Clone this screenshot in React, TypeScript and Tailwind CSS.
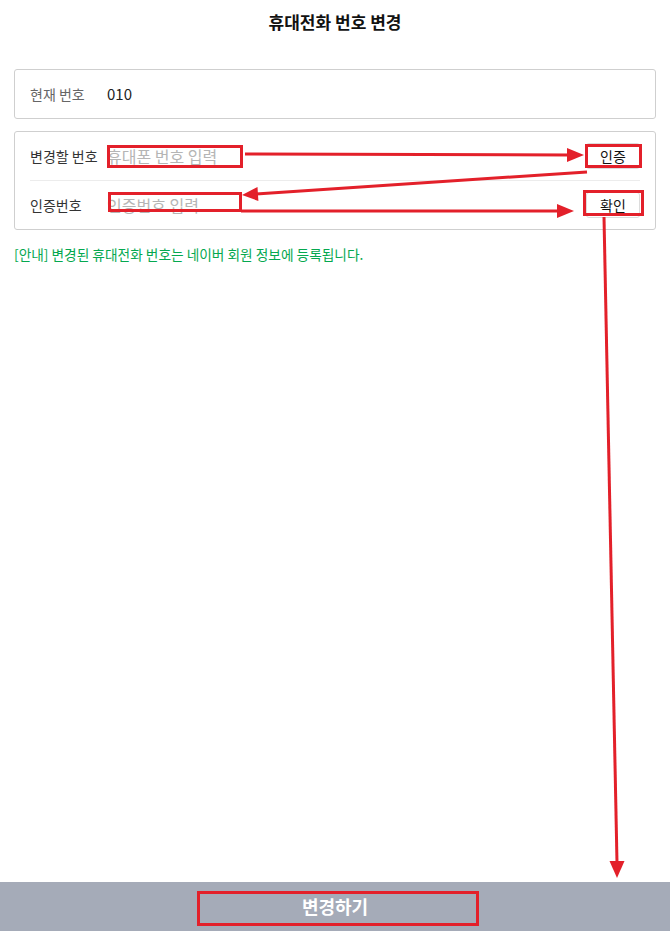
import React from "react"

const font = { fontFamily: '"Noto Sans CJK KR", "Noto Sans", sans-serif' }

function Annotations() {
  const red = "#e3202a"
  return (
    <svg
      className="pointer-events-none absolute left-0 top-0"
      width={670}
      height={931}
      viewBox="0 0 670 931"
    >
      <g fill="none" stroke={red} strokeWidth={3}>
        <rect x={108.5} y={146.5} width={133} height={20} />
        <rect x={586.5} y={145.5} width={54} height={21} />
        <rect x={109.5} y={193.5} width={131} height={17} />
        <rect x={584.5} y={191.5} width={58} height={23} />
        <rect x={198.5} y={892.5} width={279} height={32} />
        <line x1={245} y1={154} x2={570} y2={155} />
        <line x1={587} y1={172} x2={256} y2={194} />
        <line x1={241} y1={211} x2={560} y2={211} />
        <line x1={604} y1={217} x2={617} y2={863} />
      </g>
      <g fill={red}>
        <polygon points="584,155 567,148 567,162" />
        <polygon points="242,195 258.4,201 257.5,187" />
        <polygon points="574,211 557,204 557,218" />
        <polygon points="617,878 609.5,861 624.5,861" />
      </g>
    </svg>
  )
}

function Row({ label, placeholder, button }: { label: string; placeholder: string; button: string }) {
  return (
    <div className="flex h-[48px] items-center">
      <span className="w-[77px] shrink-0 text-[14px] text-[#333]">{label}</span>
      <input
        className="min-w-0 flex-1 bg-transparent text-[16px] text-[#222] outline-none placeholder:text-[#b5b5b5]"
        placeholder={placeholder}
        style={font}
      />
      <button
        className="h-[26px] w-[54px] shrink-0 rounded-[3px] border border-[#dcdcdc] bg-white text-[14px] text-[#111]"
        style={font}
      >
        {button}
      </button>
    </div>
  )
}

export default function App() {
  return (
    <div className="relative flex min-h-[931px] w-full flex-col bg-white" style={font}>
      <div className="px-[14px]">
        <h1 className="pt-[10px] text-center text-[17px] font-bold leading-[24px] text-[#111]">
          휴대전화 번호 변경
        </h1>

        <div className="mt-[35px] flex h-[50px] items-center rounded-[3px] border border-[#cfcfcf] px-[15px]">
          <span className="w-[77px] shrink-0 text-[14px] text-[#666]">현재 번호</span>
          <span className="text-[15px] text-[#222]">010</span>
        </div>

        <div className="mt-[12px] rounded-[3px] border border-[#cfcfcf] px-[15px]">
          <Row label="변경할 번호" placeholder="휴대폰 번호 입력" button="인증" />
          <div className="border-t border-[#ececec]" />
          <Row label="인증번호" placeholder="인증번호 입력" button="확인" />
        </div>

        <p className="mt-[15px] text-[13.7px] leading-[18px] text-[#05a84f]">
          [안내] 변경된 휴대전화 번호는 네이버 회원 정보에 등록됩니다.
        </p>
      </div>

      <button
        className="mt-auto flex h-[49px] w-full items-center justify-center bg-[#a5abb8] text-[18px] font-bold text-white"
        style={font}
      >
        변경하기
      </button>

      <Annotations />
    </div>
  )
}
